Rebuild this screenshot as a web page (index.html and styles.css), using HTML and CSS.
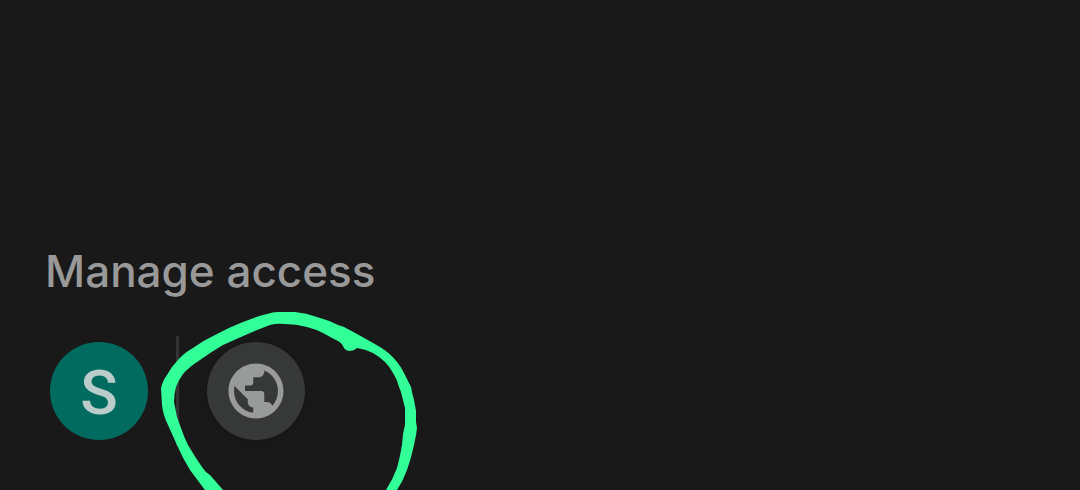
FILE: index.html
```html
<!DOCTYPE html>
<html lang="en">
<head>
<meta charset="utf-8">
<meta name="viewport" content="width=device-width, initial-scale=1">
<title>Manage access</title>
<link rel="stylesheet" href="styles.css">
</head>
<body>
<main class="panel">
  <h1 class="title">Manage access</h1>
  <div class="people">
    <button class="avatar owner" type="button" aria-label="Owner S">S</button>
    <span class="divider"></span>
    <button class="avatar public" type="button" aria-label="Anyone with the link">
      <svg class="globe" viewBox="0 0 24 24" aria-hidden="true"><path d="M12 2C6.48 2 2 6.48 2 12s4.48 10 10 10 10-4.48 10-10S17.52 2 12 2zm-1 17.93c-3.95-.49-7-3.85-7-7.93 0-.62.08-1.21.21-1.79L9 15v1c0 1.1.9 2 2 2v1.93zm6.9-2.54c-.26-.81-1-1.39-1.9-1.39h-1v-3c0-.55-.45-1-1-1H8v-2h2c.55 0 1-.45 1-1V7h2c1.1 0 2-.9 2-2v-.41c2.93 1.19 5 4.06 5 7.41 0 2.08-.8 3.97-2.1 5.39z"/></svg>
    </button>
  </div>
  <svg class="marker" viewBox="150 300 280 190" aria-hidden="true"><path d="M205 490L190 470Q182 457 177 445L168 425Q163 415 162 405L161 388Q163 380 167 375Q171 367 178 360Q184 353 193 348Q204 340 217 334Q230 327 243 322Q258 316 267 314Q273 312 278 312H295Q306 313 317 317Q328 320 338 325L344 327L357 334L366 339L380 347Q390 353 397 362Q402 368 405 375L411 387Q412 393 414 400L416 411V422L417 428L416 435L414 445Q411 459 407 470Q403 481 397 490H386Q393 479 397 468Q400 457 402 445L403 434L405 425L405 408L402 396Q401 391 399 387Q397 379 393 373Q390 367 385 362Q380 357 373 353Q365 349 357 348Q354 351 350 351Q346 351 344 348Q342 343 338 341L332 338L323 333Q315 329 307 327Q296 324 285 324Q277 323 270 325Q262 328 250 333L223 345Q211 352 200 360Q189 367 183 374Q178 381 176 387Q174 394 174 402L177 417L181 428Q184 437 188 445Q195 457 202 467Q205 472 210 475L223 490Z"/></svg>
</main>
</body>
</html>
```
FILE: styles.css
```css
body {
  margin: 0;
  background: #191919;
  color: #999;
  font-family: Inter, Roboto, sans-serif;
}

.panel {
  position: relative;
  padding: 243px 45px 44px;
}

.title {
  margin: 0;
  font-size: 44px;
  font-weight: 500;
  line-height: 56px;
}

.people {
  display: flex;
  align-items: center;
  padding: 37px 5px 0;
}

.avatar {
  display: flex;
  align-items: center;
  justify-content: center;
  box-sizing: border-box;
  width: 98px;
  height: 98px;
  padding: 0;
  border: 0;
  border-radius: 50%;
}

.owner {
  padding-top: 4px;
  background: #016b60;
  color: #bbcdca;
  font: 500 62px/62px Roboto, sans-serif;
}

.divider {
  width: 3px;
  height: 110px;
  margin: 0 28px;
  background: #333;
}

.public {
  background: #373938;
  box-shadow: 0 1px 4px 2px #171717;
}

.globe {
  width: 66px;
  height: 66px;
  fill: #999b9a;
}

.marker {
  position: absolute;
  top: 300px;
  left: 150px;
  width: 280px;
  height: 190px;
  fill: #33ff99;
  pointer-events: none;
}
```
